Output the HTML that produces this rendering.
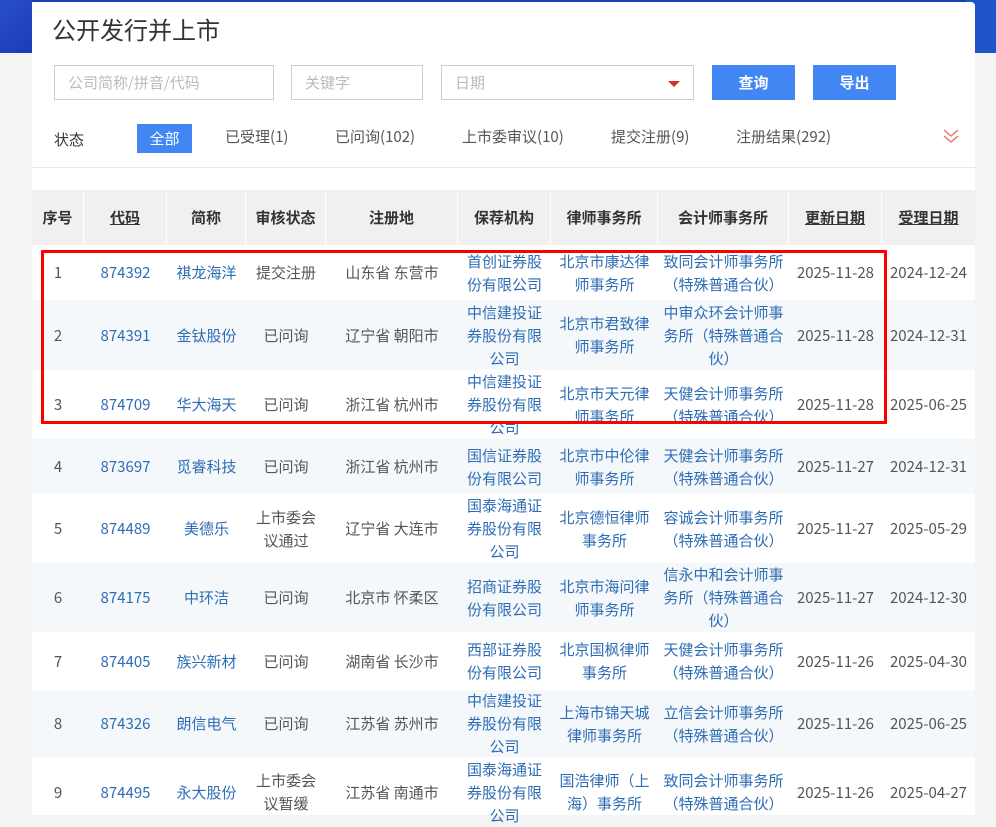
<!DOCTYPE html>
<html><head><meta charset="utf-8"><style>
*{margin:0;padding:0;box-sizing:border-box}
body{width:996px;height:815px;overflow:hidden;background:#f4f4f4;font-family:"Noto Sans CJK SC","Liberation Sans",sans-serif;position:relative}
.bgl{position:absolute;left:0;top:0;width:32px;height:53px;background:linear-gradient(135deg,#2a4fc9,#1a3bb8)}
.bgr{position:absolute;right:0;top:0;width:30px;height:53px;background:#1e55c8}
.topline{position:absolute;left:0;top:0;width:996px;height:2px;background:#1b3fb0}
.panel{position:absolute;left:32px;top:2px;width:943px;height:813px;background:#fff;border-radius:4px 4px 0 0}
.title{position:absolute;left:20px;top:10px;font-size:24px;color:#333;line-height:34px}
.inp{position:absolute;top:63px;height:35px;border:1px solid #ccc;font-size:15px;color:#bbb;padding-left:13px;line-height:33px}
.btn{position:absolute;top:63px;height:35px;width:83px;background:#4286f4;color:#fff;font-size:15px;font-weight:bold;text-align:center;line-height:35px}
.st{position:absolute;top:123px;font-size:15px;color:#555;line-height:24px}
.tabsel{position:absolute;left:105px;top:122px;width:55px;height:29px;background:#4286f4;color:#fff;font-size:15px;text-align:center;line-height:29px}
.hr{position:absolute;left:0;top:165px;width:943px;height:1px;background:#e8e8e8}
.row{position:absolute;left:0;width:943px;display:flex}
.c{display:flex;align-items:center;justify-content:center;text-align:center;font-size:15px;line-height:23px;color:#555;padding:0 4px;white-space:normal}
.hd .c{background:#f0f0f0;font-weight:bold;color:#333;border-right:1px solid #fff}
.u{text-decoration:underline}
.b{color:#2e6db4}
.p8{padding:0 8px}
.alt{background:#f5f8fb}
.d{padding:0;white-space:nowrap}
</style></head><body>
<div class="topline"></div><div class="bgl"></div><div class="bgr"></div>
<div class="panel">
<div class="title">公开发行并上市</div>
<div class="inp" style="left:22px;width:220px">公司简称/拼音/代码</div>
<div class="inp" style="left:259px;width:132px">关键字</div>
<div class="inp" style="left:409px;width:253px">日期<span style="position:absolute;right:13px;top:15px;width:0;height:0;border-left:6px solid transparent;border-right:6px solid transparent;border-top:6px solid #d9302c"></span></div>
<div class="btn" style="left:680px">查询</div>
<div class="btn" style="left:781px">导出</div>
<div class="st" style="left:22px;top:126px;color:#333">状态</div>
<div class="tabsel">全部</div>
<div class="st" style="left:193px">已受理(1)</div>
<div class="st" style="left:303px">已问询(102)</div>
<div class="st" style="left:430px">上市委审议(10)</div>
<div class="st" style="left:579px">提交注册(9)</div>
<div class="st" style="left:704px">注册结果(292)</div>
<svg style="position:absolute;left:910px;top:126px" width="18" height="16" viewBox="0 0 18 16"><path d="M2 2l7 6 7-6M2 8l7 6 7-6" fill="none" stroke="#e88080" stroke-width="1.6"/></svg>
<div class="hr"></div>

<div class="row hd" style="top:188px;height:55px">
<div class="c" style="width:52px">序号</div><div class="c u" style="width:83px">代码</div><div class="c" style="width:79px">简称</div><div class="c" style="width:80px">审核状态</div><div class="c" style="width:132px">注册地</div><div class="c" style="width:93px">保荐机构</div><div class="c" style="width:107px">律师事务所</div><div class="c" style="width:131px">会计师事务所</div><div class="c u" style="width:93px">更新日期</div><div class="c u" style="width:93px;border:0">受理日期</div></div>

<div class="row" style="top:243px;height:55px"><div class="c" style="width:52px">1</div><div class="c b" style="width:83px">874392</div><div class="c b" style="width:79px">祺龙海洋</div><div class="c" style="width:80px">提交注册</div><div class="c" style="width:132px">山东省 东营市</div><div class="c b p8" style="width:93px">首创证券股份有限公司</div><div class="c b p8" style="width:107px">北京市康达律师事务所</div><div class="c b" style="width:131px">致同会计师事务所（特殊普通合伙）</div><div class="c d" style="width:93px">2025-11-28</div><div class="c d" style="width:93px">2024-12-24</div></div>

<div class="row alt" style="top:298px;height:70px"><div class="c" style="width:52px">2</div><div class="c b" style="width:83px">874391</div><div class="c b" style="width:79px">金钛股份</div><div class="c" style="width:80px">已问询</div><div class="c" style="width:132px">辽宁省 朝阳市</div><div class="c b p8" style="width:93px">中信建投证券股份有限公司</div><div class="c b p8" style="width:107px">北京市君致律师事务所</div><div class="c b" style="width:131px">中审众环会计师事务所（特殊普通合伙）</div><div class="c d" style="width:93px">2025-11-28</div><div class="c d" style="width:93px">2024-12-31</div></div>

<div class="row" style="top:368px;height:69px"><div class="c" style="width:52px">3</div><div class="c b" style="width:83px">874709</div><div class="c b" style="width:79px">华大海天</div><div class="c" style="width:80px">已问询</div><div class="c" style="width:132px">浙江省 杭州市</div><div class="c b p8" style="width:93px">中信建投证券股份有限公司</div><div class="c b p8" style="width:107px">北京市天元律师事务所</div><div class="c b" style="width:131px">天健会计师事务所（特殊普通合伙）</div><div class="c d" style="width:93px">2025-11-28</div><div class="c d" style="width:93px">2025-06-25</div></div>

<div class="row alt" style="top:437px;height:55px"><div class="c" style="width:52px">4</div><div class="c b" style="width:83px">873697</div><div class="c b" style="width:79px">觅睿科技</div><div class="c" style="width:80px">已问询</div><div class="c" style="width:132px">浙江省 杭州市</div><div class="c b p8" style="width:93px">国信证券股份有限公司</div><div class="c b p8" style="width:107px">北京市中伦律师事务所</div><div class="c b" style="width:131px">天健会计师事务所（特殊普通合伙）</div><div class="c d" style="width:93px">2025-11-27</div><div class="c d" style="width:93px">2024-12-31</div></div>

<div class="row" style="top:492px;height:69px"><div class="c" style="width:52px">5</div><div class="c b" style="width:83px">874489</div><div class="c b" style="width:79px">美德乐</div><div class="c" style="width:80px">上市委会议通过</div><div class="c" style="width:132px">辽宁省 大连市</div><div class="c b p8" style="width:93px">国泰海通证券股份有限公司</div><div class="c b p8" style="width:107px">北京德恒律师事务所</div><div class="c b" style="width:131px">容诚会计师事务所（特殊普通合伙）</div><div class="c d" style="width:93px">2025-11-27</div><div class="c d" style="width:93px">2025-05-29</div></div>

<div class="row alt" style="top:561px;height:69px"><div class="c" style="width:52px">6</div><div class="c b" style="width:83px">874175</div><div class="c b" style="width:79px">中环洁</div><div class="c" style="width:80px">已问询</div><div class="c" style="width:132px">北京市 怀柔区</div><div class="c b p8" style="width:93px">招商证券股份有限公司</div><div class="c b p8" style="width:107px">北京市海问律师事务所</div><div class="c b" style="width:131px">信永中和会计师事务所（特殊普通合伙）</div><div class="c d" style="width:93px">2025-11-27</div><div class="c d" style="width:93px">2024-12-30</div></div>

<div class="row" style="top:630px;height:58px"><div class="c" style="width:52px">7</div><div class="c b" style="width:83px">874405</div><div class="c b" style="width:79px">族兴新材</div><div class="c" style="width:80px">已问询</div><div class="c" style="width:132px">湖南省 长沙市</div><div class="c b p8" style="width:93px">西部证券股份有限公司</div><div class="c b p8" style="width:107px">北京国枫律师事务所</div><div class="c b" style="width:131px">天健会计师事务所（特殊普通合伙）</div><div class="c d" style="width:93px">2025-11-26</div><div class="c d" style="width:93px">2025-04-30</div></div>

<div class="row alt" style="top:688px;height:67px"><div class="c" style="width:52px">8</div><div class="c b" style="width:83px">874326</div><div class="c b" style="width:79px">朗信电气</div><div class="c" style="width:80px">已问询</div><div class="c" style="width:132px">江苏省 苏州市</div><div class="c b p8" style="width:93px">中信建投证券股份有限公司</div><div class="c b p8" style="width:107px">上海市锦天城律师事务所</div><div class="c b" style="width:131px">立信会计师事务所（特殊普通合伙）</div><div class="c d" style="width:93px">2025-11-26</div><div class="c d" style="width:93px">2025-06-25</div></div>

<div class="row" style="top:755px;height:70px"><div class="c" style="width:52px">9</div><div class="c b" style="width:83px">874495</div><div class="c b" style="width:79px">永大股份</div><div class="c" style="width:80px">上市委会议暂缓</div><div class="c" style="width:132px">江苏省 南通市</div><div class="c b p8" style="width:93px">国泰海通证券股份有限公司</div><div class="c b p8" style="width:107px">国浩律师（上海）事务所</div><div class="c b" style="width:131px">致同会计师事务所（特殊普通合伙）</div><div class="c d" style="width:93px">2025-11-26</div><div class="c d" style="width:93px">2025-04-27</div></div>

<div style="position:absolute;left:9px;top:248px;width:846px;height:174px;border:3px solid #f00"></div>
</div>
</body></html>
